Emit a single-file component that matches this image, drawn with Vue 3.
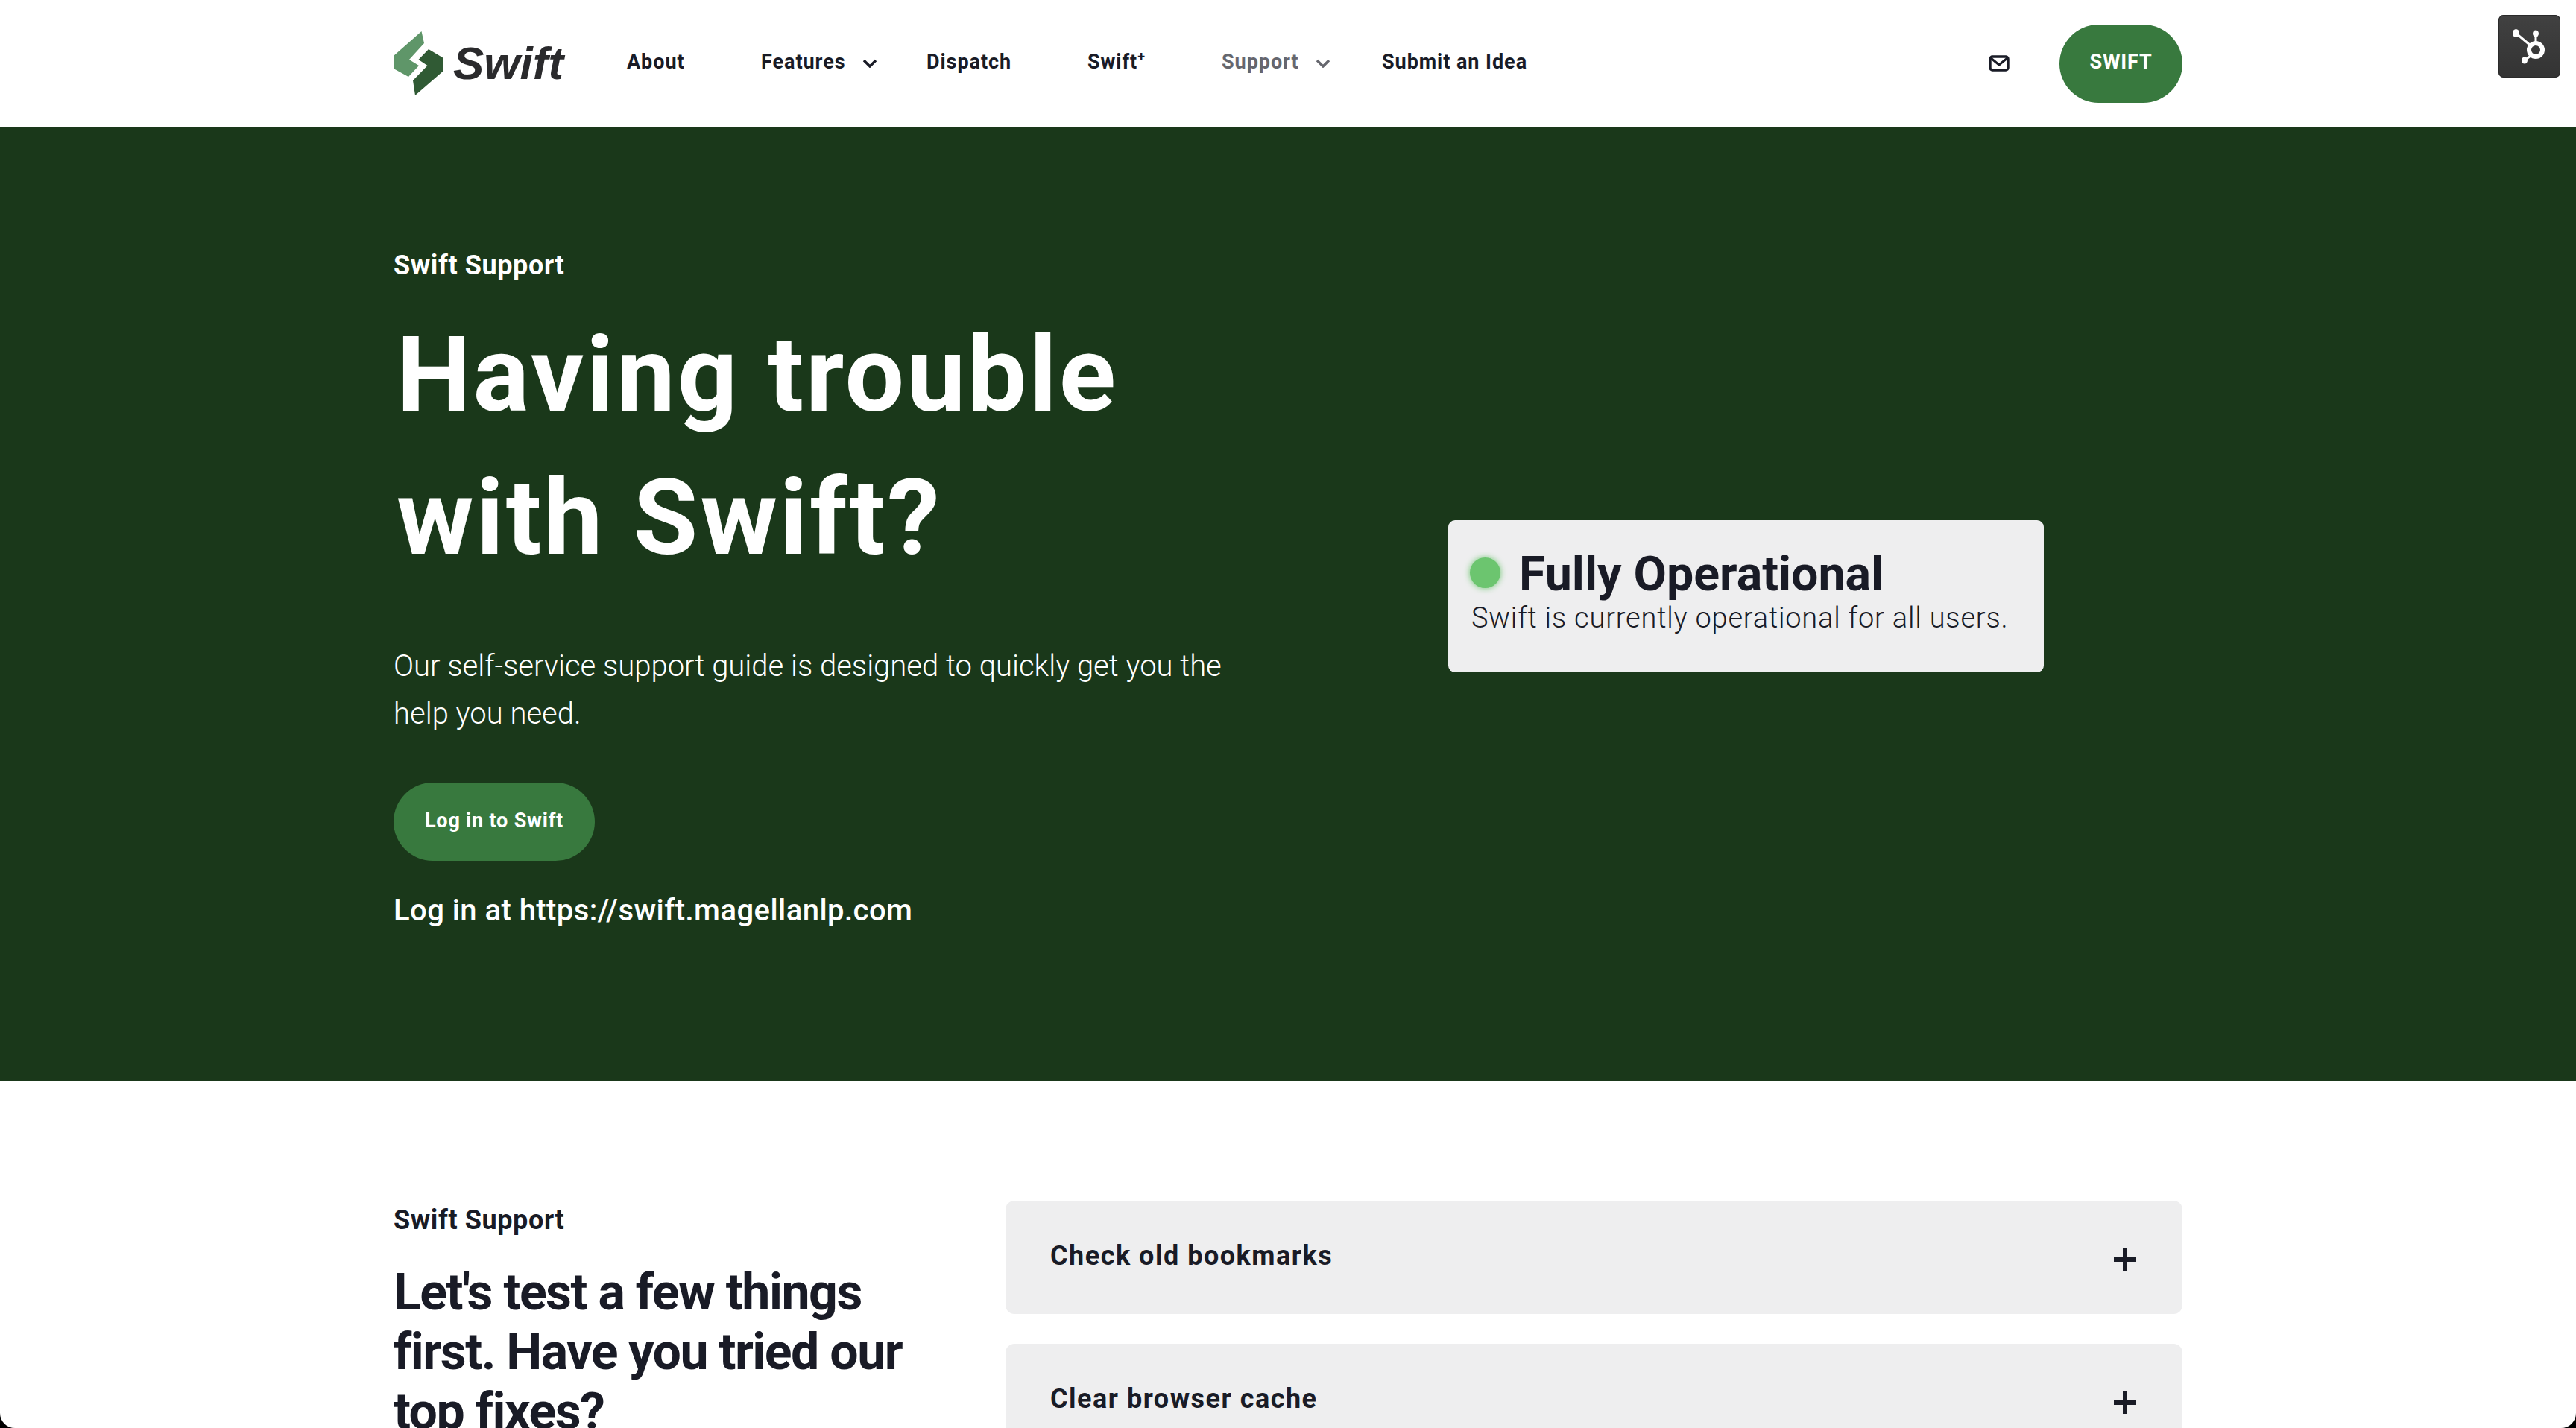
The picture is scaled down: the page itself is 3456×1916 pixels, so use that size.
<script setup>
const navItems = [
  { label: 'About', w: 180 },
  { label: 'Features', w: 222, chevron: true },
  { label: 'Dispatch', w: 216 },
  { label: 'Swift', w: 180, sup: true },
  { label: 'Support', w: 215, chevron: true, muted: true },
  { label: 'Submit an Idea', w: 193 },
]
const fixes = ['Check old bookmarks', 'Clear browser cache']
</script>

<template>
  <div class="frame">
    <div class="page">
      <header class="nav">
        <div class="nav-inner">
          <div class="logo">
            <svg class="logo-mark" viewBox="0 0 67 86" width="67" height="86">
              <polygon fill="#5f9669" points="37.5,0 41,16 21,38 34,46 20,61 0,50 0,33" />
              <polygon fill="#305a34" points="47,24 67,36 67,53 29,86 26,66 45.5,46 33.5,38" />
            </svg>
            <span class="logo-text">Swift</span>
          </div>
          <nav class="links">
            <a
              v-for="item in navItems"
              :key="item.label"
              class="link"
              :class="{ muted: item.muted }"
              :style="{ width: item.w + 'px' }"
            >
              <span>{{ item.label }}<sup v-if="item.sup" class="plus">+</sup></span>
              <svg v-if="item.chevron" class="chev" viewBox="0 0 20 12" width="20" height="12">
                <path d="M2 2l8 8 8-8" fill="none" stroke="currentColor" stroke-width="3.4" />
              </svg>
            </a>
          </nav>
          <svg class="mail" viewBox="0 0 28 22" width="28" height="22">
            <rect x="2" y="2" width="24" height="18" rx="3" fill="none" stroke="#191b26" stroke-width="3.4" />
            <path d="M3 4l11 9 11-9" fill="none" stroke="#191b26" stroke-width="3" />
          </svg>
          <a class="pill nav-pill">SWIFT</a>
        </div>
      </header>

      <section class="hero">
        <div class="hero-inner">
          <div class="hero-left">
            <p class="eyebrow">Swift Support</p>
            <h1>Having trouble<br />with Swift?</h1>
            <p class="lead">Our self-service support guide is designed to quickly get you the<br />help you need.</p>
            <a class="pill hero-pill">Log in to Swift</a>
            <p class="login">Log in at https://swift.magellanlp.com</p>
          </div>
          <div class="status">
            <div class="status-head">
              <span class="dot"></span>
              <span class="status-title">Fully Operational</span>
            </div>
            <p class="status-text">Swift is currently operational for all users.</p>
          </div>
        </div>
      </section>

      <section class="fixes">
        <div class="fixes-left">
          <p class="eyebrow dark">Swift Support</p>
          <h2>Let's test a few things<br />first. Have you tried our<br />top fixes?</h2>
        </div>
        <div class="fixes-right">
          <div v-for="f in fixes" :key="f" class="panel">
            <span class="panel-title">{{ f }}</span>
            <span class="panel-plus"></span>
          </div>
        </div>
      </section>

      <div class="hs">
        <svg viewBox="0 0 83 84" width="83" height="84">
          <g fill="none" stroke="#fff">
            <circle cx="50" cy="47" r="9" stroke-width="6" />
            <path d="M24 25L43 41" stroke-width="3" />
            <path d="M50 25V37" stroke-width="3" />
            <path d="M43 55L35 61" stroke-width="3" />
          </g>
          <g fill="#fff">
            <ellipse cx="23.5" cy="24.5" rx="4.5" ry="5.5" />
            <ellipse cx="50" cy="25" rx="4" ry="4.5" />
            <ellipse cx="35" cy="61" rx="4" ry="4.5" />
          </g>
        </svg>
      </div>
    </div>
  </div>
</template>

<style>
html, body { margin: 0; background: #000; overflow: hidden; }
</style>

<style scoped>
* { box-sizing: border-box; }
.frame {
  width: 3456px;
  height: 1916px;
  background: #000;
  overflow: hidden;
  font-family: "Roboto", "Open Sans", sans-serif;
  color: #191b26;
}
.page {
  position: relative;
  width: 3456px;
  height: 1916px;
  background: #fff;
  border-radius: 0 0 20px 20px;
  overflow: hidden;
}
p, h1, h2 { margin: 0; }
.nav { height: 170px; background: #fff; }
.nav-inner {
  width: 2400px;
  height: 100%;
  margin: 0 auto;
  display: flex;
  align-items: center;
}
.logo { display: flex; align-items: center; width: 313px; flex: none; }
.logo-mark { flex: none; }
.logo-text {
  margin-left: 13px;
  font-family: "Liberation Sans", sans-serif;
  font-size: 62px;
  font-style: italic;
  font-weight: 700;
  color: #2a2a2c;
  line-height: 1;
}
.links { display: flex; align-items: center; }
.link {
  display: flex;
  align-items: center;
  gap: 22px;
  font-size: 27px;
  line-height: 32px;
  font-weight: 700;
  letter-spacing: 0.95px;
  white-space: nowrap;
  color: #191b26;
  padding-bottom: 4px;
}
.link.muted { color: #66676e; }
.plus { font-size: 18px; line-height: 0; vertical-align: 10px; }
.chev { flex: none; margin-top: 4px; }
.mail { margin-left: auto; margin-right: 67px; flex: none; }
.pill {
  display: flex;
  align-items: center;
  justify-content: center;
  height: 105px;
  border-radius: 53px;
  background: #38793e;
  color: #fff;
  font-weight: 700;
  font-size: 27px;
  letter-spacing: 0.8px;
}
.nav-pill { width: 165px; flex: none; padding-bottom: 4px; }
.hero { height: 1281px; background: #1a381a; }
.hero-inner {
  width: 2400px;
  margin: 0 auto;
  height: 100%;
  display: flex;
  align-items: flex-start;
}
.hero-left { width: 1415px; flex: none; padding-top: 164px; color: #fff; }
.eyebrow {
  font-size: 36px;
  line-height: 44px;
  font-weight: 700;
  letter-spacing: 0.6px;
  color: #fff;
}
.eyebrow.dark { color: #191b26; }
h1 {
  margin-top: 29px;
  padding-left: 4px;
  font-size: 141px;
  line-height: 192px;
  font-weight: 700;
  letter-spacing: 3px;
}
.lead {
  margin-top: 71px;
  font-size: 40px;
  line-height: 64px;
  font-weight: 300;
  letter-spacing: 0;
  white-space: nowrap;
}
.hero-pill { margin-top: 60px; width: 270px; font-size: 27px; padding-bottom: 4px; }
.login { margin-top: 42px; font-size: 40px; line-height: 50px; font-weight: 500; letter-spacing: 0.45px; }
.status {
  width: 799px;
  height: 204px;
  margin-top: 528px;
  padding: 36px 29px;
  background: #eeeeef;
  border-radius: 9px;
}
.status-head { display: flex; align-items: center; gap: 25px; }
.dot {
  width: 41px;
  height: 41px;
  border-radius: 50%;
  background: #6cc56f;
  box-shadow: 0 0 8px #6cc56f;
  flex: none;
  margin-top: -4px;
}
.status-title { font-size: 64.5px; line-height: 72px; font-weight: 700; white-space: nowrap; }
.status-text { margin-top: 0; padding-left: 2px; font-size: 38px; line-height: 46px; letter-spacing: 0.8px; font-weight: 300; white-space: nowrap; }
.fixes {
  width: 2400px;
  margin: 0 auto;
  padding-top: 160px;
  display: flex;
  gap: 141px;
}
.fixes-left { width: 680px; flex: none; padding-top: 4px; }
h2 { margin-top: 35px; font-size: 68px; line-height: 80px; font-weight: 700; letter-spacing: -1.5px; white-space: nowrap; }
.fixes-right { flex: 1; display: flex; flex-direction: column; gap: 40px; }
.panel {
  position: relative;
  height: 152px;
  flex: none;
  padding: 0 62px 4px 60px;
  background: #eeeeef;
  border-radius: 12px;
  display: flex;
  align-items: center;
  justify-content: space-between;
}
.panel-title { font-size: 36px; font-weight: 700; letter-spacing: 1.5px; }
.panel-plus { position: relative; width: 30px; height: 30px; margin-top: 10px; flex: none; }
.panel-plus::before, .panel-plus::after { content: ""; position: absolute; background: #191b26; }
.panel-plus::before { left: 12px; top: 0; width: 6px; height: 30px; }
.panel-plus::after { left: 0; top: 12px; width: 30px; height: 6px; }
.hs {
  position: absolute;
  left: 3352px;
  top: 20px;
  width: 83px;
  height: 84px;
  border-radius: 7px;
  background: linear-gradient(#414141, #333);
  box-shadow: inset 0 0 0 1px #2a2a2a;
}
.hs svg { display: block; }
</style>
